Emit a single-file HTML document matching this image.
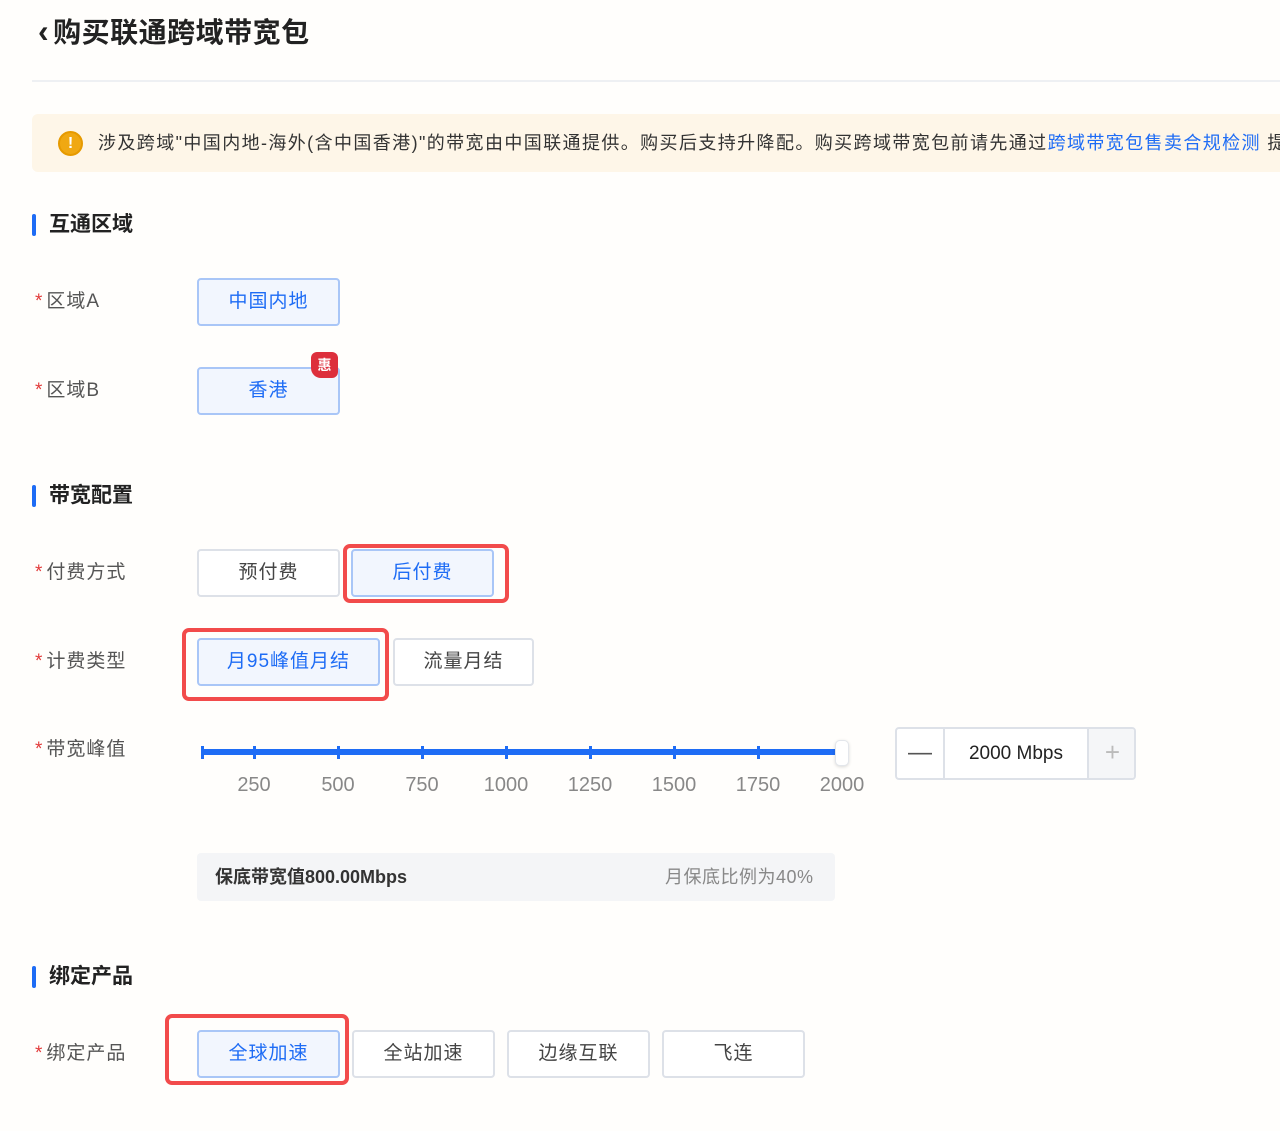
<!DOCTYPE html>
<html><head><meta charset="utf-8"><style>
*{margin:0;padding:0;box-sizing:border-box}
body{width:1280px;height:1131px;background:#fffefc;font-family:"Liberation Sans","Noto Sans CJK SC",sans-serif;position:relative;overflow:hidden;color:#333}
.a{position:absolute}
.title{left:38px;top:12px;font-size:28px;font-weight:bold;color:#222;line-height:38px;letter-spacing:0.5px}
.title i{font-style:normal;font-size:32px;margin-right:4px}
.hr{left:32px;top:80px;width:1248px;height:2px;background:#eef0f3}
.notice{left:32px;top:114px;width:1260px;height:58px;background:#fef6e8;border-radius:6px}
.ntext{left:98px;top:130px;font-size:18px;line-height:26px;color:#333;white-space:nowrap;letter-spacing:1.4px}
.ntext span{color:#1e6cf5}
.icon{left:58px;top:131px;width:25px;height:25px;border-radius:50%;background:#f0a812;border:2px solid #e69a00;color:#fff;font-weight:bold;font-size:16px;text-align:center;line-height:21px}
.sec{left:32px;width:4px;height:22px;background:#1e6cf5;border-radius:2px}
.sect{left:49px;font-size:21px;font-weight:bold;color:#222;line-height:28px}
.lbl{left:35px;font-size:19px;color:#555;line-height:26px;letter-spacing:1px}
.lbl b{color:#e23b3b;font-weight:normal;margin-right:3px}
.btn{height:48px;border:2px solid #dde1e8;border-radius:4px;background:#fff;font-size:19px;color:#444;text-align:center;line-height:44px;letter-spacing:1px}
.on{border-color:#a9c6f7;background:#f2f6fe;color:#1e6cf5}
.red{border:4px solid #f24b4b;border-radius:7px}
.tick{top:746px;width:3px;height:13px;background:#1e6cf5}
.num{top:772px;font-size:20px;color:#888;line-height:26px;width:60px;margin-left:-30px;text-align:center}
</style></head><body>
<div class="a title"><i>‹</i>购买联通跨域带宽包</div>
<div class="a hr"></div>
<div class="a notice"></div>
<div class="a icon">!</div>
<div class="a ntext">涉及跨域"中国内地-海外(含中国香港)"的带宽由中国联通提供。购买后支持升降配。购买跨域带宽包前请先通过<span>跨域带宽包售卖合规检测</span> 提</div>

<div class="a sec" style="top:214px"></div><div class="a sect" style="top:211px">互通区域</div>
<div class="a lbl" style="top:289px"><b>*</b>区域A</div>
<div class="a btn on" style="left:197px;top:278px;width:143px">中国内地</div>
<div class="a lbl" style="top:378px"><b>*</b>区域B</div>
<div class="a btn on" style="left:197px;top:367px;width:143px">香港</div>
<div class="a" style="left:311px;top:352px;width:27px;height:26px;background:#dd2f3c;border-radius:6px 6px 6px 10px;color:#fff;font-size:14px;font-weight:bold;text-align:center;line-height:26px">惠</div>

<div class="a sec" style="top:485px"></div><div class="a sect" style="top:482px">带宽配置</div>
<div class="a lbl" style="top:560px"><b>*</b>付费方式</div>
<div class="a btn" style="left:197px;top:549px;width:143px">预付费</div>
<div class="a btn on" style="left:351px;top:549px;width:143px">后付费</div>
<div class="a red" style="left:343px;top:544px;width:166px;height:59px"></div>
<div class="a lbl" style="top:649px"><b>*</b>计费类型</div>
<div class="a btn on" style="left:197px;top:638px;width:183px">月95峰值月结</div>
<div class="a btn" style="left:393px;top:638px;width:141px">流量月结</div>
<div class="a red" style="left:182px;top:628px;width:207px;height:73px"></div>

<div class="a lbl" style="top:737px"><b>*</b>带宽峰值</div>
<div class="a" style="left:202px;top:749px;width:634px;height:6px;background:#1e6cf5"></div>
<div class="a tick" style="left:201px"></div>
<div class="a tick" style="left:253px"></div><div class="a tick" style="left:337px"></div><div class="a tick" style="left:421px"></div><div class="a tick" style="left:505px"></div><div class="a tick" style="left:589px"></div><div class="a tick" style="left:673px"></div><div class="a tick" style="left:757px"></div>
<div class="a" style="left:835px;top:740px;width:14px;height:26px;background:#fff;border:1px solid #e3e6eb;border-radius:5px;box-shadow:0 1px 3px rgba(0,0,0,.15)"></div>
<div class="a num" style="left:254px">250</div><div class="a num" style="left:338px">500</div><div class="a num" style="left:422px">750</div><div class="a num" style="left:506px">1000</div><div class="a num" style="left:590px">1250</div><div class="a num" style="left:674px">1500</div><div class="a num" style="left:758px">1750</div><div class="a num" style="left:842px">2000</div>

<div class="a" style="left:895px;top:727px;width:241px;height:53px;border:2px solid #dde1e8;border-radius:4px;background:#fff;overflow:hidden">
<div class="a" style="left:0;top:0;width:48px;height:49px;border-right:2px solid #dde1e8;text-align:center;line-height:47px;font-size:24px;color:#555">—</div>
<div class="a" style="left:48px;top:0;width:142px;height:49px;text-align:center;line-height:49px;font-size:19px;color:#222">2000 Mbps</div>
<div class="a" style="left:190px;top:0;width:49px;height:49px;border-left:2px solid #dde1e8;background:#f5f6f8;text-align:center;line-height:47px;font-size:26px;color:#bbb">+</div>
</div>

<div class="a" style="left:197px;top:853px;width:638px;height:48px;background:#f4f5f7;border-radius:4px"></div>
<div class="a" style="left:215px;top:864px;font-size:18px;color:#333;font-weight:bold;line-height:26px">保底带宽值800.00Mbps</div>
<div class="a" style="left:665px;top:864px;font-size:18px;color:#888;line-height:26px;letter-spacing:0.5px">月保底比例为40%</div>

<div class="a sec" style="top:966px"></div><div class="a sect" style="top:963px">绑定产品</div>
<div class="a lbl" style="top:1041px"><b>*</b>绑定产品</div>
<div class="a btn on" style="left:197px;top:1030px;width:143px">全球加速</div>
<div class="a btn" style="left:352px;top:1030px;width:143px">全站加速</div>
<div class="a btn" style="left:507px;top:1030px;width:143px">边缘互联</div>
<div class="a btn" style="left:662px;top:1030px;width:143px">飞连</div>
<div class="a red" style="left:165px;top:1014px;width:184px;height:71px"></div>
</body></html>
